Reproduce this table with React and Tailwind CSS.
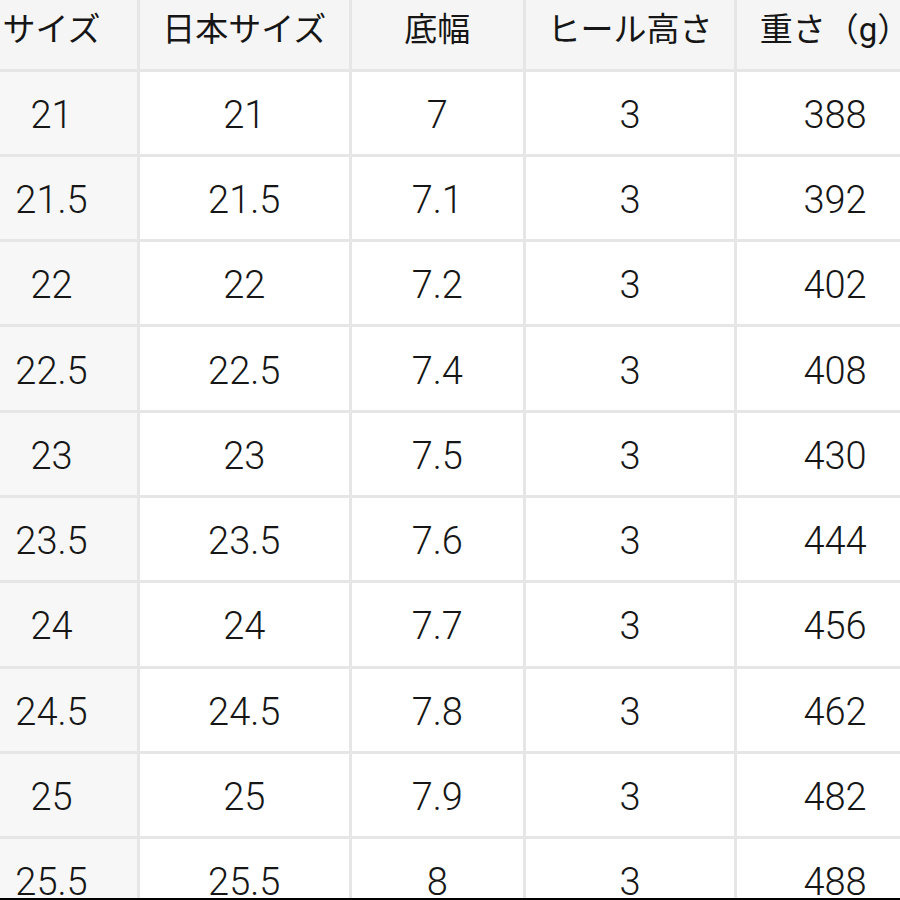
import React from 'react'

const headers = ['サイズ', '日本サイズ', '底幅', 'ヒール高さ', '重さ（g）']

const rows = [
  ['21', '21', '7', '3', '388'],
  ['21.5', '21.5', '7.1', '3', '392'],
  ['22', '22', '7.2', '3', '402'],
  ['22.5', '22.5', '7.4', '3', '408'],
  ['23', '23', '7.5', '3', '430'],
  ['23.5', '23.5', '7.6', '3', '444'],
  ['24', '24', '7.7', '3', '456'],
  ['24.5', '24.5', '7.8', '3', '462'],
  ['25', '25', '7.9', '3', '482'],
  ['25.5', '25.5', '8', '3', '488'],
]

export default function App() {
  return (
    <div className="w-[900px] h-[900px] overflow-hidden bg-white border-b-2 border-black" style={{ fontFamily: 'Roboto, "Noto Sans CJK JP", "Noto Sans", sans-serif' }}>
      <div className="-ml-[34px] -mt-[10px] grid grid-cols-[171px_208.5px_171.5px_208px_196px] grid-rows-[78.5px] auto-rows-[82.3px] gap-[3px] bg-[#e6e6e6] w-max text-[#161616]">
        {headers.map((h) => (
          <div key={h} className="flex items-center justify-center bg-[#f5f5f5] text-[33px] font-normal">
            {h}
          </div>
        ))}
        {rows.map((r, ri) =>
          r.map((c, ci) => (
            <div
              key={ri + '-' + ci}
              className={(ci === 0 ? 'bg-[#f7f7f7] ' : 'bg-white ') + 'flex items-center justify-center text-[38px] font-[350] pt-[5px]'}
            >
              {c}
            </div>
          ))
        )}
      </div>
    </div>
  )
}
